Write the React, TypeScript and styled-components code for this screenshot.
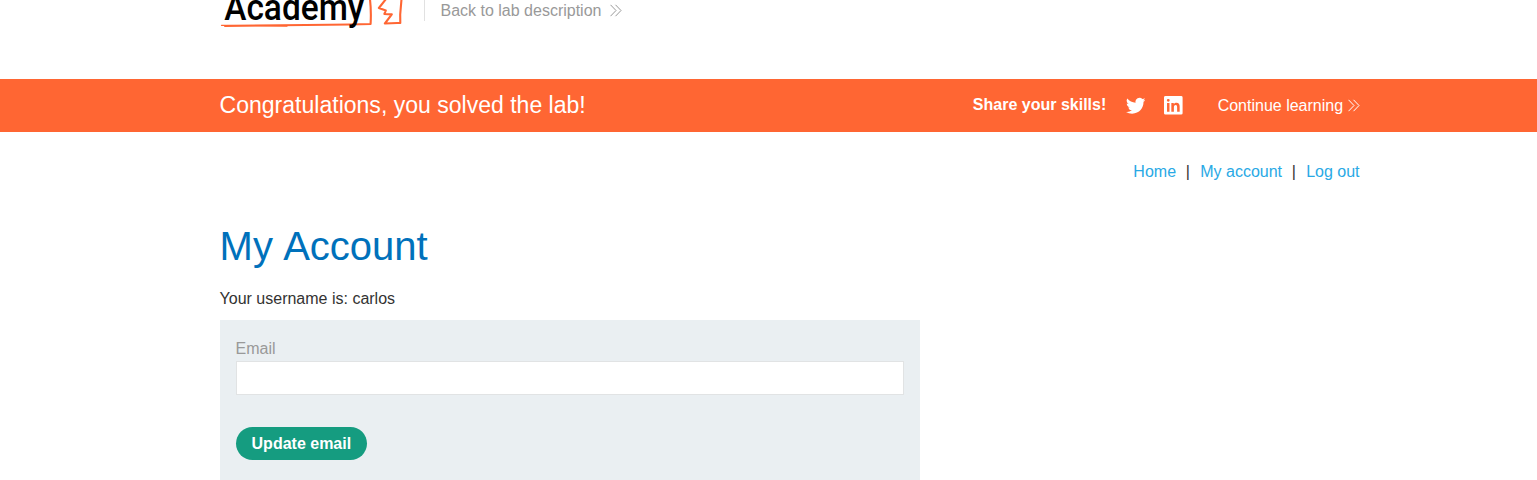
import React from 'react';
import styled, { createGlobalStyle } from 'styled-components';

const GlobalStyle = createGlobalStyle`
  *, *::before, *::after { box-sizing: border-box; }
  html { overflow: hidden; }
  body {
    margin: 0;
    height: 480px;
    overflow: hidden;
    background: #fff;
    color: #333332;
    font: 16px/24px "Liberation Sans", Arial, sans-serif;
  }
  a { text-decoration: none; }
`;

const Container = styled.div`
  display: flex;
  width: 1140px;
  margin-left: 219.57px;
`;

const Header = styled(Container)`
  height: 79px;
`;

const Logo = styled.svg`
  display: block;
  width: 184px;
  height: 32px;
  flex: none;
  overflow: hidden;
`;

const HeaderInfo = styled.div`
  height: 21px;
  margin-left: 20.43px;
  padding-left: 15.5px;
  border-left: 1px solid #e1e1e1;
  line-height: 21px;
`;

const IconLink = styled.a<{ $color: string; $gap: number }>`
  display: inline-flex;
  align-items: center;
  gap: ${({ $gap }) => $gap}px;
  color: ${({ $color }) => $color};
`;

const Chevrons = styled.svg`
  width: 12px;
  height: 13px;
  fill: none;
  stroke: currentColor;
  stroke-width: 1;
`;

const Banner = styled.section`
  height: 53px;
  background: #ff6633;
  color: #fff;
`;

const BannerContent = styled(Container)`
  width: 1140.1px;
  height: 53px;
  align-items: center;
`;

const BannerTitle = styled.h4`
  margin: 0 auto 0 0;
  padding-bottom: 1px;
  font-size: 23.04px;
  font-weight: 400;
  line-height: 51px;
`;

const Share = styled.div`
  display: flex;
  align-items: center;
  margin-right: 35px;
  font-weight: 700;
`;

const ShareLabel = styled.span`
  margin: 0 19.5px 2px 0;
`;

const SocialIcon = styled.svg<{ $size: number; $gap?: number }>`
  width: ${({ $size }) => $size}px;
  height: ${({ $size }) => $size}px;
  margin-right: ${({ $gap = 0 }) => $gap}px;
  fill: #fff;
`;

const Nav = styled(Container)`
  height: 79px;
  padding-top: 28px;
  justify-content: flex-end;
  gap: 10px;
`;

const NavLink = styled.a`
  color: #29a9e5;
`;

const Separator = styled.span`
  margin: 0 0.4px 0 -0.4px;
`;

const Account = styled.main`
  width: 700px;
  margin-left: 219.57px;
`;

const Title = styled.h1`
  margin: 0;
  height: 76px;
  color: #0071bb;
  font-size: 40px;
  font-weight: 400;
  line-height: 70px;
  word-spacing: 1.4px;
`;

const Username = styled.p`
  margin: 0;
  height: 33px;
`;

const Form = styled.form`
  display: flex;
  flex-direction: column;
  align-items: flex-start;
  height: 176px;
  padding: 16px;
  background: #eaeff2;
`;

const Label = styled.label`
  height: 25px;
  color: #999;
  line-height: 26px;
`;

const Input = styled.input`
  width: 100%;
  height: 34px;
  margin-bottom: 32px;
  padding: 0 8px;
  border: 1px solid #e1e3e4;
  border-radius: 0;
  background: #fff;
  font: inherit;
  outline: none;
`;

const Button = styled.button`
  height: 33px;
  padding: 0 16px;
  border: 0;
  border-radius: 17px;
  background: #159c80;
  color: #fff;
  font: 700 16px/33px "Liberation Sans", Arial, sans-serif;
`;

const DoubleChevron = () => (
  <Chevrons viewBox="0 0 12 13">
    <path d="M0.5 0.8 6 6.5 0.5 12.2M5.5 0.8 11 6.5 5.5 12.2" />
  </Chevrons>
);

const AcademyLogo = () => (
  <Logo viewBox="0 0 184 32">
    <g fill="none" stroke="#ff6633" strokeWidth="2.1" strokeLinejoin="round" strokeLinecap="round">
      <path d="M149.8-2Q151.4 10 150.6 24L130 24.5Q80 24.8 5 26" />
      <path d="M1.5 25.3 67 26" strokeWidth="1.3" />
      <path d="M166-1 158.9 8 165.8 10.4 164.4 14 171.8 14.4 164.9 23.5Q173 22.8 180.3 23L180.2 14.5 181.6-2" />
    </g>
    <text
      x="4.2"
      y="20"
      textLength="140"
      lengthAdjust="spacingAndGlyphs"
      fontFamily="Roboto, sans-serif"
      fontSize="37"
      fontWeight="500"
      fill="#000"
    >
      Academy
    </text>
  </Logo>
);

export default function App() {
  return (
    <>
      <GlobalStyle />
      <Header as="header">
        <AcademyLogo />
        <HeaderInfo>
          <IconLink href="#" $color="#999" $gap={8.6}>
            Back to lab description
            <DoubleChevron />
          </IconLink>
        </HeaderInfo>
      </Header>
      <Banner>
        <BannerContent>
          <BannerTitle>Congratulations, you solved the lab!</BannerTitle>
          <Share>
            <ShareLabel>Share your skills!</ShareLabel>
            <SocialIcon viewBox="0 0 24 24" $size={19.5} $gap={18.8}>
              <path d="M23.95 4.57a10 10 0 0 1-2.82.77 4.96 4.96 0 0 0 2.16-2.72c-.95.55-2 .96-3.12 1.18a4.92 4.92 0 0 0-8.39 4.49C7.69 8.1 4.07 6.13 1.64 3.16a4.93 4.93 0 0 0 1.52 6.57 4.9 4.9 0 0 1-2.23-.61v.06c0 2.38 1.7 4.37 3.95 4.82a5 5 0 0 1-2.21.09 4.94 4.94 0 0 0 4.6 3.42A9.87 9.87 0 0 1 0 19.54a13.94 13.94 0 0 0 7.55 2.21c9.05 0 14-7.5 14-13.98 0-.21 0-.42-.02-.63a9.94 9.94 0 0 0 2.46-2.55z" />
            </SocialIcon>
            <SocialIcon viewBox="0 0 19 19" $size={18.6}>
              <path
                fillRule="evenodd"
                d="M1.5 0h16A1.5 1.5 0 0 1 19 1.5v16a1.5 1.5 0 0 1-1.5 1.5h-16A1.5 1.5 0 0 1 0 17.5v-16A1.5 1.5 0 0 1 1.5 0zM3.1 7.2h2.5V16H3.1zM4.35 3a1.45 1.45 0 1 0 0 2.9 1.45 1.45 0 0 0 0-2.9zM7.5 7.2h2.5v1.2c.5-.8 1.4-1.4 2.7-1.4 2.7 0 3.3 1.7 3.3 4.1V16h-2.6v-4.3c0-1.1-.1-2.4-1.5-2.4s-1.8 1.1-1.8 2.3V16H7.500z"
              />
            </SocialIcon>
          </Share>
          <IconLink href="#" $color="#fff" $gap={4.6}>
            Continue learning
            <DoubleChevron />
          </IconLink>
        </BannerContent>
      </Banner>
      <Nav as="nav">
        <NavLink href="#">Home</NavLink>
        <Separator>|</Separator>
        <NavLink href="#">My account</NavLink>
        <Separator>|</Separator>
        <NavLink href="#">Log out</NavLink>
      </Nav>
      <Account>
        <Title>My Account</Title>
        <Username>Your username is: carlos</Username>
        <Form>
          <Label htmlFor="email">Email</Label>
          <Input id="email" type="email" />
          <Button type="button">Update email</Button>
        </Form>
      </Account>
    </>
  );
}
